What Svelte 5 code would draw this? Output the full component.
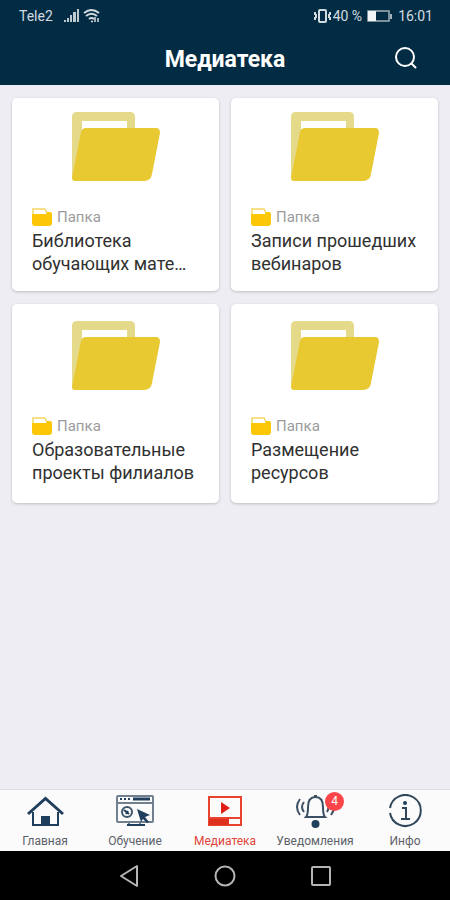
<script>
  const folders = [
    'Библиотека обучающих мате…',
    'Записи прошедших вебинаров',
    'Образовательные проекты филиалов',
    'Размещение ресурсов'
  ];
  const tabs = [
    { id: 'home', label: 'Главная' },
    { id: 'study', label: 'Обучение' },
    { id: 'media', label: 'Медиатека' },
    { id: 'alerts', label: 'Уведомления', badge: 4 },
    { id: 'info', label: 'Инфо' }
  ];
  let active = $state('media');
</script>

<div class="screen">
  <div class="status">
    <span class="carrier">Tele2</span>
    <svg class="signal" width="16" height="16" viewBox="0 0 16 16" fill="#bdc8d0">
      <path d="M0 12h2v2H0zM3 10h2v4H3zM6 7h2v7H6zM9 4h3v10H9zM13 1h2v13h-2z" />
    </svg>
    <svg width="18" height="16" viewBox="0 0 18 16" fill="none" stroke="#d3dbe0" stroke-width="2">
      <path d="M1 5Q8.500-1 16 5M3 8q5.500-4.500 11 0M6 11q2.500-2 5 0" />
      <path d="M8 13.500h2M12 9v5M15 10v4" stroke-width="1.500" />
    </svg>
    <span class="spring"></span>
    <svg class="vibrate" width="20" height="16" viewBox="0 0 20 16" fill="none" stroke="#d3dbe0" stroke-width="2">
      <rect x="6" y="2" width="7" height="12" rx="1" />
      <path d="M2 4v3M2 9v3M17 4v3M17 9v3M3 6v4M16 6v4" />
    </svg>
    <span>40 %</span>
    <svg class="battery" width="26" height="14" viewBox="0 0 26 14">
      <rect x="1" y="2" width="21" height="10" fill="none" stroke="#a4b1bb" stroke-width="1.500" />
      <path d="M1 2h8v10H1z" fill="#f2f5f6" />
      <path d="M23 5h2v5h-2z" fill="#a4b1bb" />
    </svg>
    <span>16:01</span>
  </div>

  <header>
    <h1>Медиатека</h1>
    <button class="search" aria-label="Поиск">
      <svg width="24" height="24" viewBox="0 0 24 24" fill="none" stroke="#fff" stroke-width="2" stroke-linecap="round">
        <circle cx="11" cy="10" r="9" /><path d="m17.500 16.500 4 4" />
      </svg>
    </button>
  </header>

  <main>
    {#each folders as name}
      <a class="card" href="#folder">
        <svg class="folder" width="88" height="70" viewBox="0 0 88 70">
          <path fill="#e5d98a" fill-rule="evenodd" d="M5 0h53q5 0 5 5v14H10v47H0V5q0-5 5-5ZM10 9v10h45V9Z" />
          <path fill="#e9c931" d="M14 16h70q4 0 4 5l-8 41q-1 7-8 7H3q-3 0-3-3l9-46q1-4 5-4Z" />
        </svg>
        <span class="kind">
          <svg width="20" height="18" viewBox="0 0 20 18">
            <path fill="none" stroke="#f2d763" stroke-width="1.500" d="M1 7V1h12l2 4" />
            <path fill="#fbc707" d="M0 6h14l1-2h3q2 0 2 2v9q0 3-3 3H3q-3 0-3-3Z" />
          </svg>
          Папка
        </span>
        <span class="name">{name}</span>
      </a>
    {/each}
  </main>

  <nav>
    {#each tabs as tab}
      <button class="tab" class:active={active === tab.id} onclick={() => (active = tab.id)}>
        <span class="icon">
          {#if tab.id === 'home'}
            <svg width="38" height="34" viewBox="0 0 38 34" fill="none" stroke="#203f5c" stroke-width="3">
              <path d="M2 20 19.500 4.500 37 20" />
              <path d="M7 18v13h25V18" stroke-width="2" />
              <path d="M15 31v-9h9v9Z" fill="#203f5c" stroke="none" />
            </svg>
          {:else if tab.id === 'study'}
            <svg width="40" height="34" viewBox="0 0 40 34" fill="none" stroke="#71808f" stroke-width="2">
              <rect x="2" y="2" width="36" height="26" rx="1" />
              <path d="M2 9h36M14 28v3M25 28v3" />
              <path d="M18 5h17" stroke="#203f5c" stroke-width="3" />
              <path d="M5 5h2M9 5h2M13 5h2" stroke="#203f5c" />
              <circle cx="12" cy="18" r="5" stroke="#41566a" />
              <path d="m9 16 5 4M11 20l2-3M12 31h18" stroke="#203f5c" />
              <path d="m22 15 13 6-5 2 4 5-2 1-4-4-2 3Z" fill="#203f5c" stroke="none" />
            </svg>
          {:else if tab.id === 'media'}
            <svg width="36" height="34" viewBox="0 0 36 34" fill="none" stroke="#e8432f" stroke-width="2">
              <path d="M2 3h32v28H2ZM2 24h32" />
              <path d="M2 25h20v6H2Z" fill="#df301e" stroke="none" />
              <path d="m14 8 9 6-9 6Z" fill="#df1f15" stroke="none" />
            </svg>
          {:else if tab.id === 'alerts'}
            <svg width="40" height="34" viewBox="0 0 40 34" fill="none" stroke="#3b4f63" stroke-width="2">
              <path d="M11 23q2-2 2-10c0-7 3-10 7.500-10s7.500 3 7.500 10q0 8 2 10Z" />
              <path d="M19 2h3" />
              <path d="M5 5q-6 8 0 16M9 8q-4 5 0 10M37 5q5 8-1 16M32 8q3 5 0 10" />
              <circle cx="20.500" cy="30" r="4" fill="#203f5c" stroke="none" />
            </svg>
          {:else}
            <svg width="36" height="34" viewBox="0 0 36 34" fill="none" stroke="#2f465b" stroke-width="2">
              <path d="M3 14a15.500 15.500 0 1 1 0 5" />
              <circle cx="18" cy="9" r="2" fill="#203f5c" stroke="none" />
              <path d="M15 14h4v11M14 25h9" />
            </svg>
          {/if}
          {#if tab.badge}<span class="badge">{tab.badge}</span>{/if}
        </span>
        <span>{tab.label}</span>
      </button>
    {/each}
  </nav>

  <div class="system">
    <button aria-label="Назад">
      <svg width="24" height="24" viewBox="0 0 24 24" fill="none" stroke="#b5b5b5" stroke-width="2"><path d="M20 2v20L4 12Z" stroke-linejoin="round" /></svg>
    </button>
    <button aria-label="Домой">
      <svg width="24" height="24" viewBox="0 0 24 24" fill="none" stroke="#b5b5b5" stroke-width="2"><circle cx="12" cy="12" r="9.500" /></svg>
    </button>
    <button aria-label="Недавние">
      <svg width="24" height="24" viewBox="0 0 24 24" fill="none" stroke="#b5b5b5" stroke-width="2"><rect x="3" y="3" width="18" height="18" rx="1" /></svg>
    </button>
  </div>
</div>

<style>
  :global(body) { margin: 0; }
  .screen {
    min-height: 100vh;
    display: flex;
    flex-direction: column;
    background: #eeedf3;
    font-family: Roboto, "Liberation Sans", sans-serif;
  }
  button {
    border: 0;
    padding: 0;
    background: none;
    font: inherit;
    color: inherit;
    cursor: pointer;
  }
  svg { display: block; flex: none; }
  .status {
    display: flex;
    align-items: center;
    height: 32px;
    padding: 0 17px 0 19px;
    background: #022c43;
    color: #d3dbe0;
    font-size: 14px;
  }
  .carrier { margin-right: 11px; }
  .signal { margin-right: 3px; }
  .spring { flex: 1; }
  .battery { margin: 0 5px; }
  header {
    display: grid;
    grid-template-columns: 1fr auto 1fr;
    align-items: center;
    height: 53px;
    padding: 0 32px;
    background: #022c43;
    color: #fff;
  }
  h1 {
    grid-column: 2;
    margin: 0;
    padding-top: 2px;
    font-size: 23px;
    line-height: 28px;
    font-weight: 700;
  }
  .search { justify-self: end; }
  main {
    flex: 1;
    display: grid;
    grid-template-columns: 1fr 1fr;
    grid-template-rows: minmax(193px, auto) minmax(199px, auto);
    align-content: start;
    gap: 13px 12px;
    padding: 13px 12px;
  }
  .card {
    display: flex;
    flex-direction: column;
    justify-content: center;
    min-width: 0;
    padding: 0 20px;
    border-radius: 5px;
    background: #fff;
    box-shadow: 0 1px 3px #0003;
    color: #303030;
    text-decoration: none;
  }
  .folder { align-self: center; }
  .kind {
    display: flex;
    align-items: center;
    gap: 5px;
    margin: 25px 0 2px;
    color: #9b9b9b;
    font-size: 15px;
    line-height: 20px;
  }
  .name {
    padding-bottom: 2px;
    font-size: 18px;
    line-height: 23px;
  }
  nav {
    display: grid;
    grid-template-columns: repeat(5, 1fr);
    height: 61px;
    border-top: 1px solid #dddde1;
    background: #fbfbfc;
  }
  .tab {
    display: flex;
    flex-direction: column;
    align-items: center;
    gap: 5px;
    padding-top: 4px;
    color: #5d6268;
    font-size: 12px;
    line-height: 16px;
  }
  .active { color: #dd4538; }
  .icon { position: relative; }
  .badge {
    position: absolute;
    top: -2px;
    right: -9px;
    width: 19px;
    border-radius: 10px;
    background: #fb4549;
    color: #fff;
    line-height: 19px;
    text-align: center;
  }
  .system {
    display: flex;
    justify-content: center;
    align-items: center;
    gap: 72px;
    height: 49px;
    background: #000;
  }
</style>
